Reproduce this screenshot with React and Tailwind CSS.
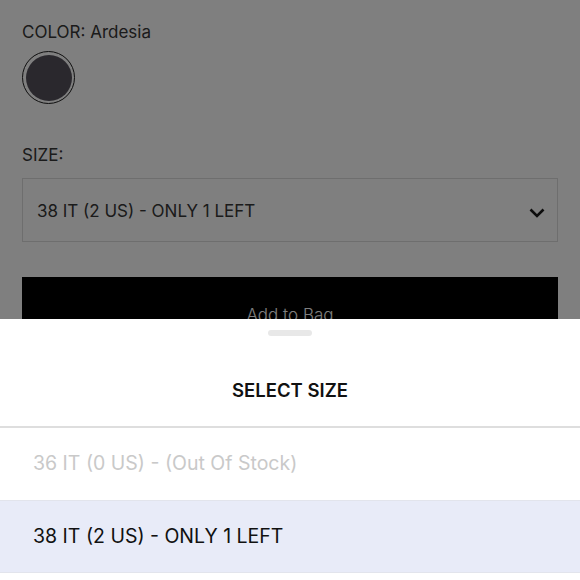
import React from "react";

const font = { fontFamily: "Inter, Lato, 'Noto Sans', sans-serif" };

export default function App() {
  return (
    <div className="relative w-[580px] h-[580px] overflow-hidden bg-white" style={font}>
      {/* page content */}
      <div className="px-[22px] pt-[20px] text-[#363636]">
        <p className="text-[17px] leading-[24px]">COLOR: Ardesia</p>
        <div className="mt-[7px] w-[53px] h-[53px] rounded-full border-[1.5px] border-[#1e1e1e] p-[2.5px]">
          <div className="w-full h-full rounded-full bg-[#54505a]" />
        </div>
        <p className="mt-[39px] text-[17px] leading-[24px]">SIZE:</p>
        <div className="mt-[11px] h-[64px] border border-[#dcdcdc] flex items-center justify-between pl-[14px] pr-[12px]">
          <span className="text-[17px] pt-[3px]">38 IT (2 US) - ONLY 1 LEFT</span>
          <svg className="mt-[6px]" width="16" height="10" viewBox="0 0 16 10" fill="none">
            <path d="M1.5 1.5 L8 8 L14.5 1.5" stroke="#1a1a1a" strokeWidth="2.6" />
          </svg>
        </div>
        <div className="mt-[35px] h-[78px] bg-black flex items-center justify-center">
          <span className="text-white text-[17px] font-light">Add to Bag</span>
        </div>
      </div>

      {/* dim overlay */}
      <div className="absolute inset-0 bg-black/50" />

      {/* bottom sheet */}
      <div className="absolute left-0 right-0 top-[319px] bottom-0 bg-white flex flex-col">
        <div className="mt-[11px] mx-auto w-[44px] h-[6px] rounded-full bg-[#e8e8e8]" />
        <h2 className="mt-[42px] mb-[24px] text-center text-[18.5px] leading-[24px] font-semibold text-[#111]">
          SELECT SIZE
        </h2>
        <div className="border-t-2 border-[#dedede]" />
        <div className="h-[72px] flex items-center pl-[33px] text-[19.5px] text-[#c9c9c9]">
          36 IT (0 US) - (Out Of Stock)
        </div>
        <div className="h-[73px] flex items-center pl-[33px] text-[19.5px] text-[#111] bg-[#e8ebf8] border-t border-b border-[#e2e4ec]">
          38 IT (2 US) - ONLY 1 LEFT
        </div>
      </div>
    </div>
  );
}
